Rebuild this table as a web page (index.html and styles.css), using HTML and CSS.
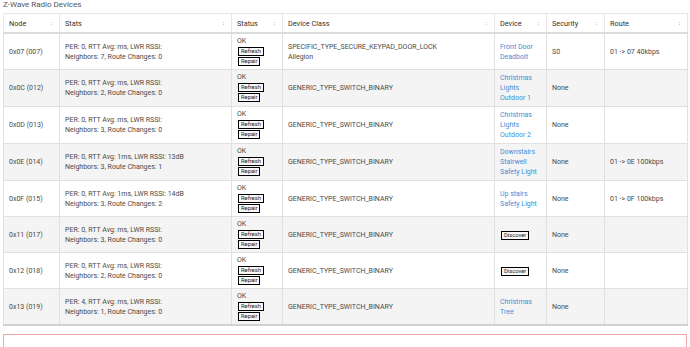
FILE: index.html
```html
<!DOCTYPE html>
<html>
<head>
<meta charset="utf-8">
<link rel="stylesheet" href="styles.css">
</head>
<body>
<div class="title">Z-Wave Radio Devices</div>
<table class="devices">
  <colgroup>
    <col class="c-node"><col class="c-stats"><col class="c-status"><col class="c-class"><col class="c-device"><col class="c-sec"><col class="c-route">
  </colgroup>
  <thead>
    <tr>
      <th><div class="th">Node<span class="sort"></span></div></th>
      <th><div class="th">Stats<span class="sort"></span></div></th>
      <th><div class="th">Status<span class="sort"></span></div></th>
      <th><div class="th">Device Class<span class="sort"></span></div></th>
      <th><div class="th">Device<span class="sort"></span></div></th>
      <th><div class="th">Security<span class="sort"></span></div></th>
      <th><div class="th">Route<span class="sort"></span></div></th>
    </tr>
  </thead>
  <tbody>
    <tr>
      <td>0x07 (007)</td>
      <td>PER: 0, RTT Avg: ms, LWR RSSI:<br>Neighbors: 7, Route Changes: 0</td>
      <td class="status">OK<button class="btn">Refresh</button><button class="btn">Repair</button></td>
      <td>SPECIFIC_TYPE_SECURE_KEYPAD_DOOR_LOCK<br>Allegion</td>
      <td><a class="dev">Front Door Deadbolt</a></td>
      <td>S0</td>
      <td>01 -&gt; 07 40kbps</td>
    </tr>
    <tr>
      <td>0x0C (012)</td>
      <td>PER: 0, RTT Avg: ms, LWR RSSI:<br>Neighbors: 2, Route Changes: 0</td>
      <td class="status">OK<button class="btn">Refresh</button><button class="btn">Repair</button></td>
      <td>GENERIC_TYPE_SWITCH_BINARY</td>
      <td><a class="dev">Christmas Lights Outdoor 1</a></td>
      <td>None</td>
      <td></td>
    </tr>
    <tr>
      <td>0x0D (013)</td>
      <td>PER: 0, RTT Avg: ms, LWR RSSI:<br>Neighbors: 3, Route Changes: 0</td>
      <td class="status">OK<button class="btn">Refresh</button><button class="btn">Repair</button></td>
      <td>GENERIC_TYPE_SWITCH_BINARY</td>
      <td><a class="dev">Christmas Lights Outdoor 2</a></td>
      <td>None</td>
      <td></td>
    </tr>
    <tr>
      <td>0x0E (014)</td>
      <td>PER: 0, RTT Avg: 1ms, LWR RSSI: 13dB<br>Neighbors: 3, Route Changes: 1</td>
      <td class="status">OK<button class="btn">Refresh</button><button class="btn">Repair</button></td>
      <td>GENERIC_TYPE_SWITCH_BINARY</td>
      <td><a class="dev">Downstairs Stairwell Safety Light</a></td>
      <td>None</td>
      <td>01 -&gt; 0E 100kbps</td>
    </tr>
    <tr>
      <td>0x0F (015)</td>
      <td>PER: 0, RTT Avg: 1ms, LWR RSSI: 14dB<br>Neighbors: 3, Route Changes: 2</td>
      <td class="status">OK<button class="btn">Refresh</button><button class="btn">Repair</button></td>
      <td>GENERIC_TYPE_SWITCH_BINARY</td>
      <td><a class="dev">Up stairs Safety Light</a></td>
      <td>None</td>
      <td>01 -&gt; 0F 100kbps</td>
    </tr>
    <tr>
      <td>0x11 (017)</td>
      <td>PER: 0, RTT Avg: ms, LWR RSSI:<br>Neighbors: 3, Route Changes: 0</td>
      <td class="status">OK<button class="btn">Refresh</button><button class="btn">Repair</button></td>
      <td>GENERIC_TYPE_SWITCH_BINARY</td>
      <td><button class="btn btn-inline">Discover</button></td>
      <td>None</td>
      <td></td>
    </tr>
    <tr>
      <td>0x12 (018)</td>
      <td>PER: 0, RTT Avg: ms, LWR RSSI:<br>Neighbors: 2, Route Changes: 0</td>
      <td class="status">OK<button class="btn">Refresh</button><button class="btn">Repair</button></td>
      <td>GENERIC_TYPE_SWITCH_BINARY</td>
      <td><button class="btn btn-inline">Discover</button></td>
      <td>None</td>
      <td></td>
    </tr>
    <tr>
      <td>0x13 (019)</td>
      <td>PER: 4, RTT Avg: ms, LWR RSSI:<br>Neighbors: 1, Route Changes: 0</td>
      <td class="status">OK<button class="btn">Refresh</button><button class="btn">Repair</button></td>
      <td>GENERIC_TYPE_SWITCH_BINARY</td>
      <td><a class="dev">Christmas Tree</a></td>
      <td>None</td>
      <td></td>
    </tr>
  </tbody>
</table>
<div class="alert"></div>
</body>
</html>
```

FILE: styles.css
```css
html, body {
  margin: 0;
  background: #fff;
}
body {
  padding: 0 3px;
  font-family: Roboto, "Liberation Sans", sans-serif;
  color: #4a4a4a;
  font-size: 7px;
}
.title {
  font-size: 8px;
  line-height: 10px;
  color: #555;
  height: 13px;
}
.devices {
  width: 684px;
  table-layout: fixed;
  border-collapse: collapse;
  border: 1px solid #e2e2e2;
  border-bottom: 2px solid #d2d2d2;
}
.c-node { width: 56px; }
.c-stats { width: 172px; }
.c-status { width: 51px; }
.c-class { width: 212px; }
.c-device { width: 52px; }
.c-sec { width: 58px; }
.c-route { width: 83px; }

.devices th {
  font-weight: normal;
  text-align: left;
  font-size: 7.3px;
  color: #333;
  padding: 0 5px;
  height: 18px;
  border: 1px solid #e8e8e8;
  border-bottom: 2px solid #dcdcdc;
}
.th {
  display: flex;
  justify-content: space-between;
  align-items: center;
}
.sort {
  display: flex;
  flex-direction: column;
  gap: 1px;
  width: 2px;
  margin-right: 1px;
}
.sort::before, .sort::after {
  content: "";
  display: block;
  width: 1px;
  height: 1px;
  background: #c8c8c8;
}
.devices td {
  vertical-align: middle;
  padding: 3px 5px;
  line-height: 10px;
  height: 29px;
  border: 1px solid #e0e0e0;
  white-space: nowrap;
}
.devices tbody tr:nth-child(even) td {
  background: #f4f4f4;
}
.devices td.status {
  vertical-align: top;
  line-height: 9px;
  padding-top: 3px;
  padding-bottom: 0;
}
.dev {
  color: #3d8fd8;
  white-space: normal;
  display: block;
}
.devices td:nth-child(5) {
  white-space: normal;
}
.btn {
  display: block;
  font-family: Roboto, "Liberation Sans", sans-serif;
  font-size: 5.8px;
  line-height: 7px;
  color: #222;
  background: #f8f8f8;
  border: 1px solid #000;
  padding: 0 2px;
  margin: 1px 0 1px 1px;
  border-radius: 0;
}
.btn-inline {
  display: inline-block;
  margin: 0 0 0 1px;
  padding: 0 2px;
}
.alert {
  margin-top: 8px;
  height: 20px;
  border: 1px solid #f0a8a8;
  width: 682px;
}
```
